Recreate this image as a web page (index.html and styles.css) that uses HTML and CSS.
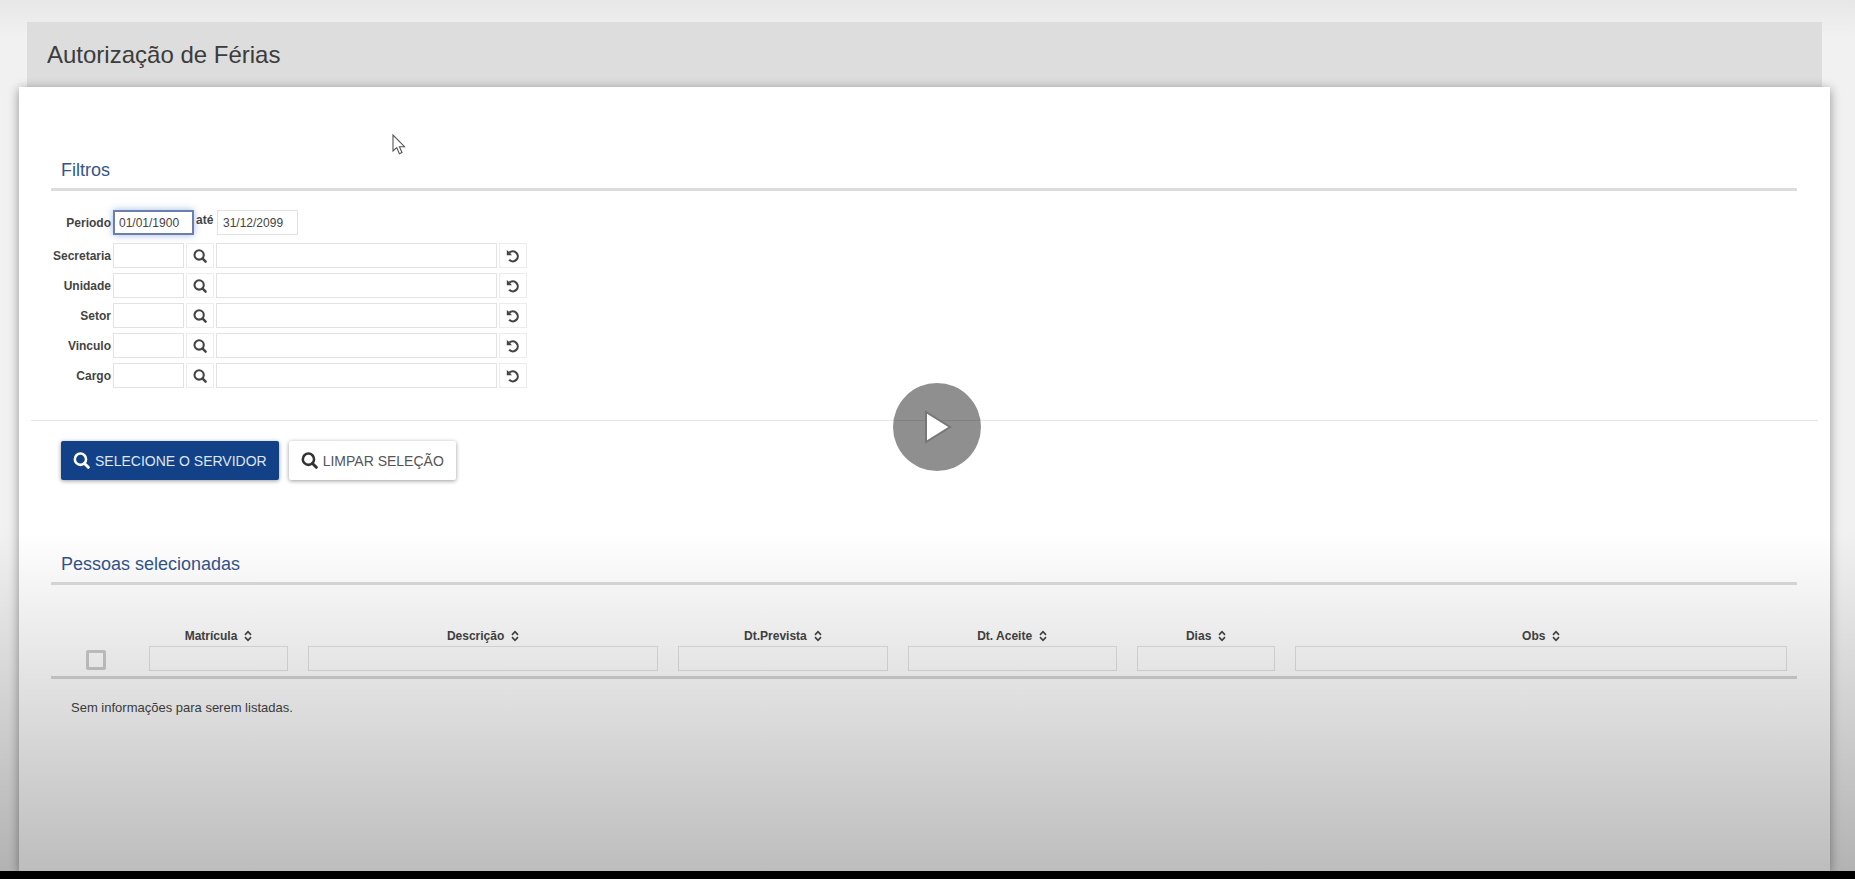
FILE: index.html
```html
<!DOCTYPE html>
<html lang="pt-BR">
<head>
    <meta charset="UTF-8">
    <meta name="viewport" content="width=device-width, initial-scale=1.0">
    <link rel="stylesheet" href="styles.css">
    <title>Autorização de Férias</title>
</head>
<body>
    <!-- Shared icons -->
    <svg class="symbols" aria-hidden="true">
        <symbol id="search" viewBox="0 0 16 16">
            <circle cx="7" cy="6.8" r="5.3" fill="none" stroke="currentColor" stroke-width="2.4"/>
            <path d="M10.8 10.8L14.4 14.4" stroke="currentColor" stroke-width="2.8" stroke-linecap="round"/>
        </symbol>
        <symbol id="undo" viewBox="0 0 14 14">
            <path d="M3.4 3.6A5 5 0 1 1 3.2 10.8" fill="none" stroke="currentColor" stroke-width="2.2"/>
            <path d="M.8 1V6.2H6L4.4 4.4L2.6 2.6Z" fill="currentColor"/>
        </symbol>
        <symbol id="sort" viewBox="0 0 8 12">
            <path d="M1 4.9L4 1.6L7 4.9M1 7.1L4 10.4L7 7.1" fill="none" stroke="currentColor" stroke-width="1.6"/>
        </symbol>
    </svg>

    <main class="page">
        <header class="page-header">
            <h1>Autorização de Férias</h1>
        </header>

        <div class="panel">
            <section class="section">
                <h2>Filtros</h2>
                <div class="filters">
                    <div class="row period">
                        <label for="inicio">Periodo</label>
                        <input type="text" id="inicio" class="field date focused" value="01/01/1900">
                        <label for="fim" class="until">até</label>
                        <input type="text" id="fim" class="field date" value="31/12/2099">
                    </div>
                    <div class="row">
                        <label for="secretaria">Secretaria</label>
                        <input type="text" id="secretaria" class="field code">
                        <button class="icon-btn" aria-label="Buscar secretaria"><svg><use href="#search"/></svg></button>
                        <input type="text" class="field name" aria-label="Nome da secretaria">
                        <button class="icon-btn" aria-label="Limpar secretaria"><svg><use href="#undo"/></svg></button>
                    </div>
                    <div class="row">
                        <label for="unidade">Unidade</label>
                        <input type="text" id="unidade" class="field code">
                        <button class="icon-btn" aria-label="Buscar unidade"><svg><use href="#search"/></svg></button>
                        <input type="text" class="field name" aria-label="Nome da unidade">
                        <button class="icon-btn" aria-label="Limpar unidade"><svg><use href="#undo"/></svg></button>
                    </div>
                    <div class="row">
                        <label for="setor">Setor</label>
                        <input type="text" id="setor" class="field code">
                        <button class="icon-btn" aria-label="Buscar setor"><svg><use href="#search"/></svg></button>
                        <input type="text" class="field name" aria-label="Nome do setor">
                        <button class="icon-btn" aria-label="Limpar setor"><svg><use href="#undo"/></svg></button>
                    </div>
                    <div class="row">
                        <label for="vinculo">Vinculo</label>
                        <input type="text" id="vinculo" class="field code">
                        <button class="icon-btn" aria-label="Buscar vinculo"><svg><use href="#search"/></svg></button>
                        <input type="text" class="field name" aria-label="Nome do vinculo">
                        <button class="icon-btn" aria-label="Limpar vinculo"><svg><use href="#undo"/></svg></button>
                    </div>
                    <div class="row">
                        <label for="cargo">Cargo</label>
                        <input type="text" id="cargo" class="field code">
                        <button class="icon-btn" aria-label="Buscar cargo"><svg><use href="#search"/></svg></button>
                        <input type="text" class="field name" aria-label="Nome do cargo">
                        <button class="icon-btn" aria-label="Limpar cargo"><svg><use href="#undo"/></svg></button>
                    </div>
                </div>
            </section>

            <hr class="divider">

            <div class="actions">
                <button class="button primary"><svg><use href="#search"/></svg>SELECIONE O SERVIDOR</button>
                <button class="button"><svg><use href="#search"/></svg>LIMPAR SELEÇÃO</button>
            </div>

            <section class="section">
                <h2>Pessoas selecionadas</h2>
                <table class="people">
                    <colgroup>
                        <col class="col-check">
                        <col class="col-small">
                        <col class="col-desc">
                        <col class="col-date">
                        <col class="col-date">
                        <col class="col-small">
                        <col class="col-obs">
                    </colgroup>
                    <thead>
                        <tr>
                            <th><input type="checkbox" class="check" aria-label="Selecionar todos"></th>
                            <th><label for="f-matricula">Matrícula <svg><use href="#sort"/></svg></label><input type="text" id="f-matricula" class="field"></th>
                            <th><label for="f-descricao">Descrição <svg><use href="#sort"/></svg></label><input type="text" id="f-descricao" class="field"></th>
                            <th><label for="f-prevista">Dt.Prevista <svg><use href="#sort"/></svg></label><input type="text" id="f-prevista" class="field"></th>
                            <th><label for="f-aceite">Dt. Aceite <svg><use href="#sort"/></svg></label><input type="text" id="f-aceite" class="field"></th>
                            <th><label for="f-dias">Dias <svg><use href="#sort"/></svg></label><input type="text" id="f-dias" class="field"></th>
                            <th><label for="f-obs">Obs <svg><use href="#sort"/></svg></label><input type="text" id="f-obs" class="field"></th>
                        </tr>
                    </thead>
                    <tbody>
                        <tr>
                            <td colspan="7">Sem informações para serem listadas.</td>
                        </tr>
                    </tbody>
                </table>
            </section>
        </div>

        <!-- Player overlay -->
        <div class="shade"></div>
        <svg class="cursor" viewBox="0 0 14 21" aria-hidden="true">
            <path d="M1 1V17L4.7 13.6L7.4 19.8L10 18.6L7.4 12.7H12.5Z" fill="#fff" stroke="#555" stroke-width="1.1"/>
        </svg>
        <button class="play" aria-label="Reproduzir">
            <svg viewBox="0 0 28 34"><path d="M2 2V32L26 17Z"/></svg>
        </button>
    </main>
</body>
</html>
```

FILE: styles.css
```css
* {
    box-sizing: border-box;
}
body {
    margin: 0;
    height: 100vh;
    padding-bottom: 8px;
    background-color: #000;
    font-family: "Liberation Sans", Arial, sans-serif;
    font-size: 12px;
    color: #444;
}
button, input {
    font-family: inherit;
    color: inherit;
}
.symbols {
    display: none;
}

.page {
    position: relative;
    display: flex;
    flex-direction: column;
    height: 100%;
    padding: 22px 25px 0 19px;
    overflow: hidden;
    background: linear-gradient(#e7e7e7, #f1f1f1 36px);
}
.page-header {
    margin: 0 8px;
    padding: 18px 20px;
    background-color: #ddd;
}
h1 {
    margin: 0;
    font-size: 24px;
    line-height: 29px;
    font-weight: normal;
    color: #3c3c3c;
}
.panel {
    position: relative;
    flex: 1;
    padding-top: 66px;
    background-color: #fff;
    box-shadow: 0 2px 10px rgba(0, 0, 0, 0.4);
}

.section {
    margin: 0 33px 0 32px;
}
h2 {
    margin: 0;
    padding: 6px 10px 7px;
    border-bottom: 3px solid #dcdcdc;
    font-size: 18px;
    line-height: 22px;
    font-weight: normal;
    color: #34548c;
}

/* Filters */
.filters {
    display: flex;
    flex-direction: column;
    gap: 5px;
    padding-top: 19px;
}
.row {
    display: flex;
    align-items: center;
    gap: 2px;
}
.row label {
    width: 60px;
    text-align: right;
    font-weight: bold;
}
.period {
    margin-bottom: 3px;
}
.row .until {
    width: 17px;
    padding-bottom: 5px;
}
.field {
    height: 25px;
    padding: 0 5px;
    border: 1px solid #e2e2e2;
    background-color: transparent;
    font-size: 12px;
}
.date {
    width: 81px;
}
.date:last-child {
    margin-left: 2px;
}
.focused {
    border: 2px solid #6a7fab;
    padding: 0 4px;
    box-shadow: 0 0 7px rgba(50, 100, 200, 0.45);
}
.code {
    width: 71px;
}
.name {
    width: 281px;
}
.icon-btn {
    display: flex;
    align-items: center;
    justify-content: center;
    width: 28px;
    height: 25px;
    padding: 0;
    border: 1px solid #ececec;
    background-color: #fff;
}
.icon-btn svg {
    width: 14px;
    height: 14px;
}

.divider {
    height: 1px;
    margin: 32px 12px 20px;
    border: 0;
    background-color: #e6e6e6;
}

/* Buttons */
.actions {
    display: flex;
    gap: 10px;
    margin: 0 42px 67px;
}
.button {
    display: flex;
    align-items: center;
    gap: 5px;
    height: 39px;
    padding: 0 12px;
    border: 0;
    border-radius: 2px;
    background-color: #fff;
    box-shadow: 0 1px 4px rgba(0, 0, 0, 0.4);
    font-size: 14px;
    color: #555;
}
.button svg {
    width: 17px;
    height: 17px;
    color: #333;
}
.primary {
    background-color: #124188;
    color: #dfe6f2;
}
.primary svg {
    color: #fff;
}

/* Table */
.people {
    width: 100%;
    table-layout: fixed;
    border-collapse: collapse;
}
.col-check {
    width: 5%;
}
.col-small {
    width: 9%;
}
.col-desc {
    width: 21%;
}
.col-date {
    width: 13%;
}
.col-obs {
    width: 29%;
}
.people th {
    padding: 43px 10px 5px;
    border-bottom: 3px solid #d6d6d6;
    vertical-align: bottom;
}
.people th label {
    display: flex;
    align-items: center;
    justify-content: center;
    gap: 7px;
    height: 16px;
    margin-bottom: 2px;
}
.people th svg {
    width: 8px;
    height: 12px;
}
.people .field {
    display: block;
    width: 100%;
}
.check {
    appearance: none;
    display: block;
    width: 20px;
    height: 20px;
    margin: 0 25px 1px;
    border: 3px solid #ccc;
    border-radius: 2px;
}
.people td {
    padding: 20px;
    font-size: 13px;
    line-height: 17px;
}

/* Player overlay */
.shade {
    position: absolute;
    left: 0;
    right: 0;
    bottom: 0;
    height: 340px;
    background: linear-gradient(rgba(0, 0, 0, 0), rgba(0, 0, 0, 0.05) 20%, rgba(0, 0, 0, 0.26));
}
.cursor {
    position: absolute;
    left: 392px;
    top: 134px;
    width: 14px;
    height: 21px;
}
.play {
    position: absolute;
    left: 50%;
    top: 383px;
    width: 88px;
    height: 88px;
    margin-left: -35px;
    padding: 0 0 0 2px;
    border: 0;
    border-radius: 50%;
    background-color: rgba(0, 0, 0, 0.44);
}
.play svg {
    width: 28px;
    height: 34px;
    vertical-align: middle;
    fill: #fff;
    stroke: #777;
    stroke-width: 2;
}
```
